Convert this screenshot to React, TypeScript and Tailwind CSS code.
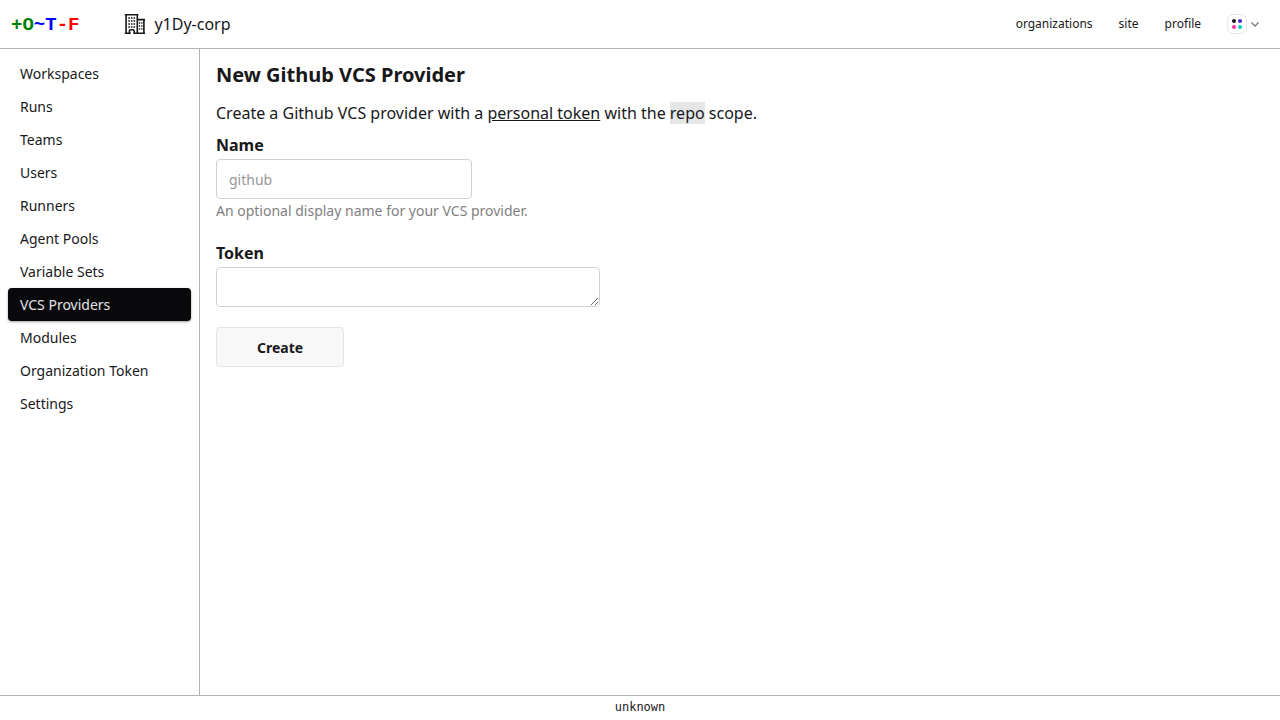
import React from "react";

const menu = [
  "Workspaces",
  "Runs",
  "Teams",
  "Users",
  "Runners",
  "Agent Pools",
  "Variable Sets",
  "VCS Providers",
  "Modules",
  "Organization Token",
  "Settings",
];

function BuildingIcon() {
  return (
    <svg viewBox="0 0 24 24" className="size-6" fill="none" stroke="currentColor" aria-hidden="true">
      <path strokeWidth="1.6" d="M1.8 2.8h13.6M3.1 3v18.5M14.3 3v18.5M14.5 7.6h7.6M20.9 8v13.5M1.8 21.2h6M10.5 21.2h11.6" />
      <path strokeWidth="1.6" d="M6.4 21.5v-2.2a1.6 1.6 0 0 1 1.6-1.6h1.6a1.6 1.6 0 0 1 1.6 1.6v2.2" />
      <path strokeWidth="1.5" strokeDasharray="1.6 1" d="M5.3 6h6.8M5.3 9h6.8M5.3 12h6.8M5.3 15h6.8" />
      <path strokeWidth="1.3" strokeDasharray="1.3 1" d="M15.9 11h3.7M15.9 14h3.7M15.9 17h3.7" />
    </svg>
  );
}

export default function App() {
  return (
    <div className="flex min-h-screen flex-col bg-white font-['Noto_Sans',sans-serif] text-[#18181b]">
      <header className="flex h-[49px] items-center border-b border-[#b3b3b3] pl-[11px] pr-[21px]">
        <a
          href="#"
          className="pt-[2px] font-['Liberation_Mono',monospace] text-[19px] leading-6 font-bold whitespace-nowrap"
        >
          <span className="text-[#008000]">+O</span>
          <span className="text-[#0000ff]">~T</span>
          <span className="text-[#ff0000]">-F</span>
        </a>
        <a href="#" className="ml-11 flex items-center gap-[7px]">
          <BuildingIcon />
          <span>y1Dy-corp</span>
        </a>
        <nav className="ml-auto flex items-center gap-[26px] text-xs">
          <a href="#">organizations</a>
          <a href="#">site</a>
          <a href="#">profile</a>
          <button type="button" aria-label="Theme" className="flex items-center gap-1">
            <span className="flex size-5 flex-wrap content-center justify-center gap-[2px] rounded-md border border-[#e4e4e7] px-1">
              <span className="size-1 rounded-full bg-[#18181b]" />
              <span className="size-1 rounded-full bg-[#422ad5]" />
              <span className="size-1 rounded-full bg-[#f43098]" />
              <span className="size-1 rounded-full bg-[#00d3bb]" />
            </span>
            <svg viewBox="0 0 8 8" className="size-2" fill="none" stroke="#777777" strokeWidth="1.3" aria-hidden="true">
              <path d="M0.5 2.5 4 6l3.5-3.5" />
            </svg>
          </button>
        </nav>
      </header>
      <div className="flex flex-1">
        <aside className="w-[200px] shrink-0 border-r border-[#b3b3b3] p-2">
          <ul className="text-sm">
            {menu.map((item) => (
              <li key={item}>
                <a
                  href="#"
                  className={
                    item === "VCS Providers"
                      ? "block rounded bg-[#09090b] px-3 py-1.5 leading-[21px] text-[#e4e4e7] shadow shadow-black/30"
                      : "block rounded px-3 py-1.5 leading-[21px]"
                  }
                >
                  {item}
                </a>
              </li>
            ))}
          </ul>
        </aside>
        <main className="flex flex-1 flex-col items-start px-4 pt-3">
          <h1 className="text-xl leading-7 font-bold">New Github VCS Provider</h1>
          <p className="mt-3">
            Create a Github VCS provider with a{" "}
            <a href="#" className="underline">
              personal token
            </a>{" "}
            with the <span className="bg-[#e5e6e6]">repo</span> scope.
          </p>
          <form className="mt-2 flex flex-col items-start gap-5">
            <div className="flex flex-col">
              <label htmlFor="name" className="font-bold">
                Name
              </label>
              <input
                id="name"
                type="text"
                placeholder="github"
                className="mt-[2px] h-10 w-64 rounded border border-[#d1d1d1] px-3 text-sm placeholder:text-[#979798]"
              />
              <span className="mt-[2px] text-sm text-[#7f7f81]">An optional display name for your VCS provider.</span>
            </div>
            <div className="flex flex-col">
              <label htmlFor="token" className="font-bold">
                Token
              </label>
              <textarea
                id="token"
                className="mt-[2px] h-10 min-h-10 w-96 rounded border border-[#d1d1d1] px-3 py-2 text-sm"
              />
            </div>
            <button
              type="button"
              className="h-10 w-32 rounded border border-[#e5e5e5] bg-[#f8f8f8] pt-px text-sm leading-5 font-bold"
            >
              Create
            </button>
          </form>
        </main>
      </div>
      <footer className="flex h-[25px] items-start justify-center border-t border-[#b3b3b3] pt-[3px] font-['DejaVu_Sans_Mono',monospace] text-xs">
        unknown
      </footer>
    </div>
  );
}
